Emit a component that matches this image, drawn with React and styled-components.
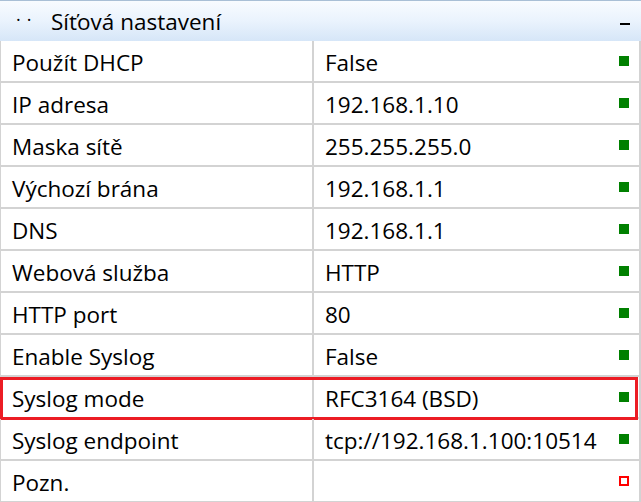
import styled, { createGlobalStyle } from 'styled-components';

const GlobalStyle = createGlobalStyle`
  html, body {
    margin: 0;
    padding: 0;
    background: #fff;
  }
  body {
    font-family: "Open Sans", "Noto Sans", "Liberation Sans", sans-serif;
    color: #000;
  }
`;

const rows = [
  { name: 'Použít DHCP', value: 'False' },
  { name: 'IP adresa', value: '192.168.1.10' },
  { name: 'Maska sítě', value: '255.255.255.0' },
  { name: 'Výchozí brána', value: '192.168.1.1' },
  { name: 'DNS', value: '192.168.1.1' },
  { name: 'Webová služba', value: 'HTTP' },
  { name: 'HTTP port', value: '80' },
  { name: 'Enable Syslog', value: 'False' },
  { name: 'Syslog mode', value: 'RFC3164 (BSD)', selected: true },
  { name: 'Syslog endpoint', value: 'tcp://192.168.1.100:10514' },
  { name: 'Pozn.', value: '', empty: true },
];

const Panel = styled.div`
  width: 641px;
  height: 502px;
  overflow: hidden;
`;

const Header = styled.div`
  height: 40px;
  border-top: 1px solid #a9bfd6;
  background: linear-gradient(to bottom, #f8fbff 0%, #eaf3fd 50%, #d6e6f8 100%);
  display: flex;
  align-items: center;
  padding: 0 11px 0 16px;
  font-size: 22.5px;
`;

const Dots = styled.span`
  width: 35px;
  letter-spacing: 6px;
  font-size: 18px;
  margin-top: -4px;
`;

const Title = styled.span`
  flex: 1;
`;

const Collapse = styled.span`
  width: 10px;
  height: 2px;
  background: #000;
  margin-top: 6px;
`;

const Row = styled.div`
  position: relative;
  display: grid;
  grid-template-columns: 313px 1fr;
  height: 40px;
  border-left: 1px solid #d3d3d3;
  border-right: 2px solid #d3d3d3;
  border-bottom: 2px solid #d3d3d3;
  font-size: 22.5px;

  ${({ $selected }) =>
    $selected &&
    `
    &::after {
      content: '';
      position: absolute;
      left: -1px;
      top: 0;
      width: 638px;
      height: 43px;
      box-sizing: border-box;
      border: 3px solid #ec1c24;
      pointer-events: none;
    }
  `}
`;

const NameCell = styled.div`
  display: flex;
  align-items: center;
  padding: 2px 0 0 11px;
  border-right: 2px solid #d3d3d3;
  white-space: nowrap;
`;

const ValueCell = styled.div`
  display: flex;
  align-items: center;
  padding: 2px 10px 0 11px;
  white-space: nowrap;
`;

const ValueText = styled.span`
  flex: 1;
`;

const Status = styled.span`
  width: 10px;
  height: 10px;
  box-sizing: border-box;
  background: ${({ $empty }) => ($empty ? '#fff' : '#008000')};
  border: ${({ $empty }) => ($empty ? '2px solid #ff0000' : 'none')};
  margin-top: -2px;
`;

export default function App() {
  return (
    <>
      <GlobalStyle />
      <Panel>
        <Header>
          <Dots>··</Dots>
          <Title>Síťová nastavení</Title>
          <Collapse />
        </Header>
        {rows.map((r) => (
          <Row key={r.name} $selected={r.selected}>
            <NameCell>{r.name}</NameCell>
            <ValueCell>
              <ValueText>{r.value}</ValueText>
              <Status $empty={r.empty} />
            </ValueCell>
          </Row>
        ))}
      </Panel>
    </>
  );
}
